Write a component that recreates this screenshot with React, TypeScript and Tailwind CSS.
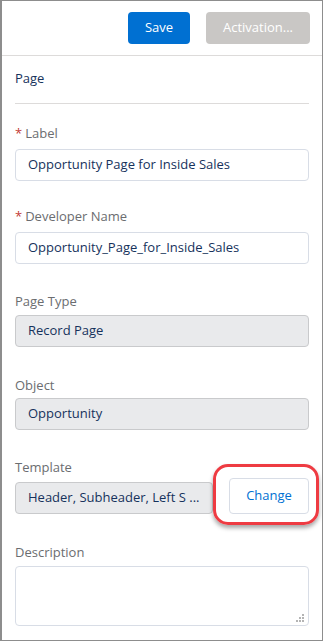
import React from 'react'

const font = { fontFamily: '"Open Sans", "Liberation Sans", sans-serif' }

const Label = ({ text, required, mt }: { text: string; required?: boolean; mt: string }) => (
    <div className={`${mt} text-[13px] leading-[18px] text-[#6b6d70]`}>
        {required && <span className="text-[#c23934] mr-[3px]">*</span>}
        {text}
    </div>
)

const App = () => {
    return (
        <div style={font} className="relative w-[323px] h-[641px] bg-white border border-l-2 border-[#8d8d8d] overflow-hidden">
            {/* header */}
            <div className="flex justify-end items-center gap-4 h-[55px] border-b border-[#dddbda] px-[12px]">
                <button className="w-[62px] h-[32px] rounded bg-[#0070d2] text-white text-[13px]">Save</button>
                <button className="w-[104px] h-[32px] rounded bg-[#c9c7c5] text-white text-[13px]">Activation...</button>
            </div>

            <div className="flex flex-col px-[13px]">
                <div className="mt-[12px] text-[13px] leading-[20px] text-[#16325c]">Page</div>
                <div className="mt-[15px] h-px bg-[#dddbda]" />

                <Label text="Label" required mt="mt-[20px]" />
                <div className="mt-[7px] h-[32px] rounded border border-[#d8dde6] pl-3 flex items-center text-[13px] text-[#16325c]">
                    Opportunity Page for Inside Sales
                </div>

                <Label text="Developer Name" required mt="mt-[26px]" />
                <div className="mt-[7px] h-[32px] rounded border border-[#d8dde6] pl-3 flex items-center text-[13px] text-[#16325c]">
                    Opportunity_Page_for_Inside_Sales
                </div>

                <Label text="Page Type" mt="mt-[28px]" />
                <div className="mt-[5px] h-[32px] rounded border border-[#c9cacc] bg-[#e9eaec] pl-3 flex items-center text-[13px] text-[#16325c]">
                    Record Page
                </div>

                <Label text="Object" mt="mt-[29px]" />
                <div className="mt-[4px] h-[32px] rounded border border-[#c9cacc] bg-[#e9eaec] pl-3 flex items-center text-[13px] text-[#16325c]">
                    Opportunity
                </div>

                <Label text="Template" mt="mt-[28px]" />
                <div className="mt-[2px] flex items-end gap-4 h-[36px]">
                    <div className="w-[198px] h-[32px] rounded border border-[#c9cacc] bg-[#e9eaec] pl-3 flex items-center text-[13px] text-[#16325c] whitespace-nowrap overflow-hidden">
                        Header, Subheader, Left S ...
                    </div>
                    <button className="w-[80px] h-[36px] rounded border border-[#d8dde6] bg-white text-[13px] text-[#0070d2]">Change</button>
                </div>

                <Label text="Description" mt="mt-[29px]" />
                <div className="relative mt-[5px] h-[60px] rounded border border-[#d8dde6]">
                    <svg className="absolute right-[4px] bottom-[3px]" width="8" height="8" viewBox="0 0 8 8" fill="#b4b4b4">
                        <rect x="6" y="0" width="2" height="2" />
                        <rect x="3" y="3" width="2" height="2" />
                        <rect x="6" y="3" width="2" height="2" />
                        <rect x="0" y="6" width="2" height="2" />
                        <rect x="3" y="6" width="2" height="2" />
                        <rect x="6" y="6" width="2" height="2" />
                    </svg>
                </div>
            </div>

            {/* callout */}
            <div className="absolute left-[211px] top-[463px] w-[106px] h-[61px] rounded-[15px] border-[3px] border-[#ee3b42] shadow-[0_3px_4px_rgba(0,0,0,0.35)]" />
        </div>
    )
}

export default App
